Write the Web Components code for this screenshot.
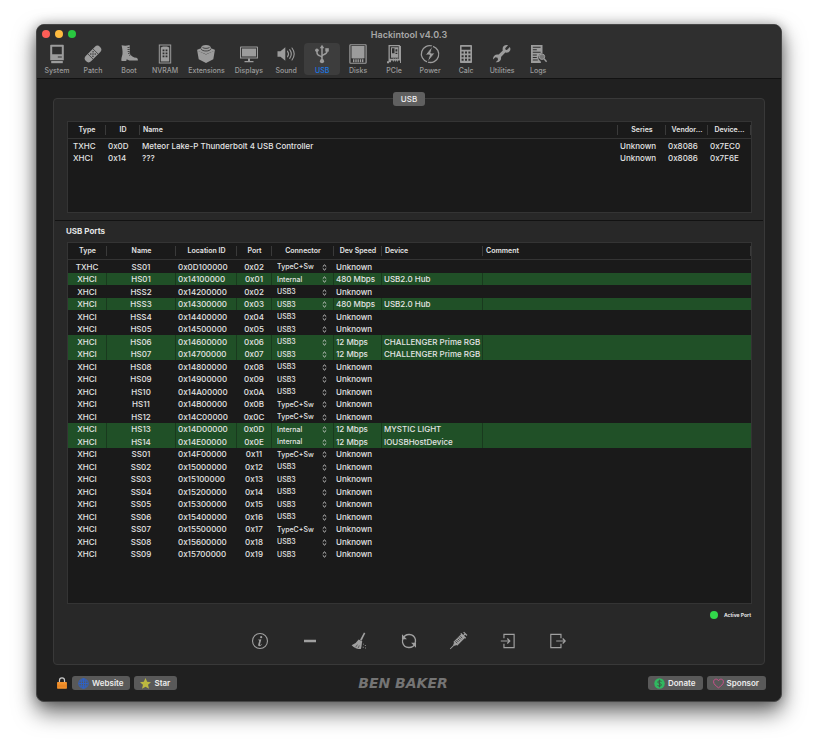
<!DOCTYPE html>
<html lang="en">
<head>
<meta charset="utf-8">
<meta name="viewport" content="width=device-width, initial-scale=1">
<title>Hackintool</title>
<style>
  body {
    background: #fff;
    color: #e4e4e4;
    font-family: Inter, "Liberation Sans", sans-serif;
    font-size: 8px;
    margin: 0;
  }
</style>
</head>
<body>

<template id="window-template">
  <style>
    :host {
      background: #202020;
      border: 1px solid #474747;
      border-radius: 8px;
      box-shadow: 0 10px 22px rgba(0, 0, 0, 0.6), 0 0 12px rgba(0, 0, 0, 0.25);
      box-sizing: border-box;
      display: flex;
      flex-direction: column;
      margin: 24px 36px 48px;
      min-height: calc(100vh - 72px);
    }
    .top {
      background: #2f2f2f;
      border-bottom: 1px solid #121212;
      border-radius: 7px 7px 0 0;
    }
    .title {
      align-items: center;
      display: grid;
      grid-template-columns: 1fr auto 1fr;
      height: 18px;
      padding: 0 5px;
    }
    h1 {
      color: #a8a8a8;
      font-size: 9px;
      font-weight: 600;
      margin: 0;
    }
    .lights {
      display: flex;
      gap: 5px;
    }
    .lights i {
      background: #fe5e57;
      border-radius: 50%;
      height: 8px;
      width: 8px;
    }
    .lights i:nth-child(2) { background: #febb3f; }
    .lights i:nth-child(3) { background: #29c840; }
    nav {
      display: flex;
      padding: 0 0 3px 2px;
    }
    main {
      display: flex;
      flex: 1;
      flex-direction: column;
      padding: 19px 16px 0;
    }
    footer {
      align-items: center;
      display: grid;
      grid-template-columns: 1fr auto 1fr;
      height: 36px;
      padding: 0 15px 0 19px;
    }
  </style>
  <div class="top">
    <div class="title">
      <div class="lights"><i></i><i></i><i></i></div>
      <h1><slot name="title"></slot></h1>
    </div>
    <nav><slot name="tools"></slot></nav>
  </div>
  <main><slot></slot></main>
  <footer><slot name="footer"></slot></footer>
</template>

<template id="tool-template">
  <style>
    :host { display: block; }
    button {
      align-items: center;
      background: none;
      border: 0;
      border-radius: 4px;
      color: #9c9c9c;
      display: flex;
      flex-direction: column;
      font: 500 7px/8px Inter, sans-serif;
      gap: 3px;
      height: 32px;
      min-width: 36px;
      padding: 1px 5px 0;
    }
    :host([selected]) button { background: #3d3d3d; }
    :host([selected]) span { color: #1a78e8; }
  </style>
  <button type="button"><hack-icon></hack-icon><span><slot></slot></span></button>
</template>

<template id="tab-template">
  <style>
    :host {
      background: #282828;
      border: 1px solid #393939;
      border-radius: 4px;
      display: flex;
      flex: 1;
      flex-direction: column;
    }
    .tab {
      align-self: center;
      background: #606060;
      border: 0;
      border-radius: 3px;
      color: #efefef;
      font: 500 8px/14px Inter, sans-serif;
      margin: -7px 0 15px;
      padding: 0 8px;
    }
  </style>
  <button type="button" class="tab"></button>
  <slot></slot>
</template>

<template id="table-template">
  <style>
    :host {
      background: #1a1a1a;
      border: 1px solid #343434;
      display: block;
      margin: 0 12px 0 13px;
    }
    :host(.ports) { flex: 1; }
    table {
      border-spacing: 0;
      table-layout: fixed;
      width: 100%;
    }
    th {
      background: linear-gradient(#3a3a3a, #3a3a3a) right center / 1px 10px no-repeat;
      border-bottom: 1px solid #343434;
      box-sizing: border-box;
      font-weight: 600;
      font-size: 7px;
      line-height: 16px;
      padding: 0 3px;
      white-space: nowrap;
    }
    td {
      border-right: 1px solid transparent;
      font-weight: 500;
      line-height: 12px;
      padding: 0 2px;
      white-space: nowrap;
    }
    th.left { text-align: left; }
    td.center { text-align: center; }
    td.inset { padding-left: 5px; }
    /* rows run on a 25px pitch for every two */
    tr { height: 12px; }
    tbody tr:nth-child(odd) { height: 13px; }
    tr.active td {
      background: #205027;
      border-right-color: #193a1e;
    }
    tr.active td:last-child { border-right-color: #205027; }
  </style>
  <table><thead><tr></tr></thead><tbody></tbody></table>
</template>

<template id="picker-template">
  <style>
    :host {
      align-items: center;
      box-sizing: border-box;
      display: flex;
      height: 12px;
      padding: 1px 4px 0 3px;
    }
    select {
      appearance: none;
      background: none;
      border: 0;
      color: #e4e4e4;
      flex: 1;
      font: 500 7px/10px Inter, sans-serif;
      min-width: 0;
      padding: 0;
    }
    option { background: #1a1a1a; }
    svg {
      height: 7px;
      pointer-events: none;
      width: 5px;
    }
  </style>
  <select>
    <option>USB3</option>
    <option>Internal</option>
    <option>TypeC+Sw</option>
  </select>
  <svg viewBox="0 0 5 7" fill="none" stroke="#d0d0d0" stroke-width="1"><path d="M.8 2.600 2.500 1l1.700 1.600M.8 4.400 2.500 6l1.700-1.600"/></svg>
</template>

<template id="push-template">
  <style>
    :host { display: block; }
    a {
      align-items: center;
      background: #595959;
      border-radius: 3px;
      color: #ececec;
      display: flex;
      font-weight: 600;
      gap: 3px;
      line-height: 14px;
      padding: 0 7px 0 6px;
      text-decoration: none;
    }
  </style>
  <a href="#"><hack-icon size="11"></hack-icon><slot></slot></a>
</template>

<template id="actions-template">
  <style>
    :host {
      align-self: center;
      display: grid;
      grid-template-columns: repeat(7, 1fr);
      margin: 9px 0 14px;
      max-width: 347px;
      width: 100%;
    }
    button {
      background: none;
      border: 0;
      color: #a0a0a0;
      display: flex;
      justify-content: center;
      padding: 0;
    }
  </style>
</template>

<hack-window>
  <span slot="title">Hackintool v4.0.3</span>
  <tool-item slot="tools" icon="system">System</tool-item>
  <tool-item slot="tools" icon="patch">Patch</tool-item>
  <tool-item slot="tools" icon="boot">Boot</tool-item>
  <tool-item slot="tools" icon="nvram">NVRAM</tool-item>
  <tool-item slot="tools" icon="extensions">Extensions</tool-item>
  <tool-item slot="tools" icon="displays">Displays</tool-item>
  <tool-item slot="tools" icon="sound">Sound</tool-item>
  <tool-item slot="tools" icon="usb" selected>USB</tool-item>
  <tool-item slot="tools" icon="disks">Disks</tool-item>
  <tool-item slot="tools" icon="pcie">PCIe</tool-item>
  <tool-item slot="tools" icon="power">Power</tool-item>
  <tool-item slot="tools" icon="calc">Calc</tool-item>
  <tool-item slot="tools" icon="utilities">Utilities</tool-item>
  <tool-item slot="tools" icon="logs">Logs</tool-item>

  <tab-panel label="USB">
    <usb-controllers></usb-controllers>
    <usb-heading>USB Ports</usb-heading>
    <usb-ports class="ports"></usb-ports>
    <port-legend>Active Port</port-legend>
    <port-actions></port-actions>
  </tab-panel>

  <app-footer slot="footer">
    <hack-icon name="lock" size="12"></hack-icon>
    <push-link icon="globe">Website</push-link>
    <push-link icon="star">Star</push-link>
  </app-footer>
  <brand-name slot="footer">BEN BAKER</brand-name>
  <app-footer slot="footer" class="end">
    <push-link icon="dollar">Donate</push-link>
    <push-link icon="heart">Sponsor</push-link>
  </app-footer>
</hack-window>

<script>
// all icons are drawn on a 20 x 20 grid
const ICONS = {
  system: `<path fill-rule="evenodd" d="M4 .8h12q.8 0 .8.8v14.600H3.200V1.600Q3.200.8 4 .8zm1.200 2v7.400h9.600V2.800zm5.600 9.600v1h4v-1z"/><path d="M4.200 17h11.600v2.200H4.200z"/>`,
  patch: `<g transform="rotate(-45 10 10)"><rect x="0" y="6.200" width="20" height="7.600" rx="3.800"/><path d="M6.400 6v8M13.600 6v8" stroke="#2f2f2f" stroke-width=".7"/><g fill="#2f2f2f"><circle cx="8.400" cy="8.500" r=".7"/><circle cx="11.600" cy="8.500" r=".7"/><circle cx="10" cy="10" r=".7"/><circle cx="8.400" cy="11.500" r=".7"/><circle cx="11.600" cy="11.500" r=".7"/></g></g>`,
  boot: `<path d="M2.600 1.200c2.600.7 5.300.6 8-.2.300 3 .200 5.800.4 8.400.8 2.900 3.600 3.900 6.400 4.400 1.200.3 1.500 1.500 1.500 2.700h-8.700l-2.500-1.200-.5 1.700H2.500c-.6-2.300.6-4.500 1-7 .3-3-.3-5.800-.9-8.800z"/><path d="M8.500 3.500h2M8.500 5.500h2.200M8.700 7.500h2M9 9.600l2-.8M10.200 11.500l1.600-1" stroke="#2f2f2f" stroke-width=".8"/>`,
  nvram: `<path fill-rule="evenodd" d="M3.800.5h12.400v19H3.800zm1 1v17h10.400v-17z"/><path d="M5.800 3.500 8 2.500h4l2.200 1v14H5.800z"/><path d="M7.600 5.500h1.800v1.800H7.600zm3 0h1.800v1.800h-1.800zm-3 3h1.800v1.800H7.600zm3 0h1.800v1.800h-1.800zm-3 3h1.800v1.800H7.600zm3 0h1.800v1.800h-1.800z" fill="#2f2f2f"/>`,
  extensions: `<path d="M1.200 5.800 5 4.300c.2-2.300 2-3.300 5-3.300s4.800 1 5 3.300l3.800 1.500v1L10 10.200 1.200 6.800z"/><path d="m1.200 6.500 8.800 4 8.800-4-1.500 8.800L10 19l-7.300-3.700z"/><path d="M5 4.600c.5 3.200 9.500 3.200 10 0M6.500 3.400c1.200 1.300 5.800 1.300 7 0" fill="none" stroke="#2f2f2f" stroke-width=".8"/>`,
  displays: `<path fill-rule="evenodd" d="M1.800 2.500h16.400q.8 0 .8.800v11.200H1V3.300q0-.8.800-.8zm.3 1.100v9.800h15.800V3.600z"/><path d="M3 4.500h14v8H3zM9 14.500h2V17h3.500v1.200h-9V17H9z"/>`,
  sound: `<path d="M1.500 7.200h3L9.300 3.300v13.400l-4.800-3.900h-3z"/><path d="M11.500 7.200q2 2.800 0 5.600M13.700 5.600q3.200 4.400 0 8.800M16 4q4.400 6 0 12" fill="none" stroke="currentColor" stroke-width="1.100" stroke-linecap="round"/>`,
  usb: `<g fill="none" stroke="currentColor" stroke-width="1.500"><path d="M10 17V3.500M10 13.700c0-2.200-5-1.400-5-5V7M10 12.300c0-2.200 5-1.400 5-5V6"/></g><path d="M10 .8 12.300 4.200H7.700z"/><circle cx="10" cy="17.200" r="2.100"/><circle cx="4.900" cy="6.300" r="1.800"/><path d="M13.300 4.200h3.500v3.400h-3.500z"/>`,
  disks: `<path fill-rule="evenodd" d="M2.500.2h15q1.200 0 1.200 1.200v17.200q0 1.200-1.200 1.200h-15q-1.200 0-1.200-1.200V1.400Q1.300.2 2.500.2zm0 1v17.600h15V1.200z"/><path d="M3.500 2h13v12.200h-13zM5 15.200h1.400v3H5zm2.300 0h1.400v3H7.300zm2.200 0h1.400v3H9.500zm2.300 0h1.400v3h-1.400zm2.200 0h1.400v3H14z"/><path d="M4.500 14.500h11" stroke="#686868" stroke-width="1"/>`,
  pcie: `<path fill-rule="evenodd" d="M4.500 1h10.700q1 0 1 1v14.500H7v1.700H5v1H3v-2h1.500zm1.300 1.300v12.500h9V2.300z"/><path fill-rule="evenodd" d="M7 3.300h7.300v10.400H7zm1 1v5h2.500v-5zm3.500 1v2.200h1.800V5.300zm0 3.500v1.300h1.800V8.800z"/><path d="M9.400 14.500v3M11.400 14.500v3M13.400 14.500v3M16.500 2v17" stroke="currentColor" stroke-width="1"/>`,
  power: `<path d="M7.200 17.900A8.300 8.300 0 0 1 12.200 2M13 2.300A8.300 8.300 0 0 1 7.900 18.100" fill="none" stroke="currentColor" stroke-width="1.300"/><path d="M12.800 1.500 5.300 11h4.200l-2.300 7.500L15 9h-4.200z" stroke="#2f2f2f" stroke-width=".9"/>`,
  calc: `<path fill-rule="evenodd" d="M4.800 1h10.400q.8 0 .8.800v16.400q0 .8-.8.800H4.800Q4 19 4 18.200V1.800Q4 1 4.800 1zm.8 1.800v3h8.800v-3zm0 4.800v2h2v-2zm3.400 0v2h2v-2zm3.400 0v2h2v-2zm-6.800 3.600v2h2v-2zm3.400 0v2h2v-2zm3.400 0v2h2v-2zm-6.800 3.600v2h2v-2zm3.400 0v2h2v-2zm3.400 0v2h2v-2z"/>`,
  utilities: `<path d="M17.900 2.900 14.900 6l-1.300-.3-.4-1.500 2.800-3c-3.600-.8-6.200 1.700-5.200 5.200L6.700 10.600c-3-.9-6 1.200-5.600 4.900l2.300-2.300 2.200.6.400 2.100-2.300 2.400c3.700.5 6-2 5.300-5.400l4.300-4.300c3.700.8 6.300-2.100 4.600-5.700z"/>`,
  logs: `<path fill-rule="evenodd" d="M3 1h11.500v8.500a4 4 0 0 0-2 7.500l.5 2H3zm1.800 1.800v1h7.800v-1zm0 2.500v1h4v-1zm0 2.500v1h7.800v-1zm0 2.600v1h4v-1zm0 2.600v1h4v-1zm0 2.600v1h5v-1z"/><circle cx="14" cy="12.700" r="2.700" fill="#777" stroke="currentColor" stroke-width="1"/><path d="m16 14.800 2.600 3" stroke="currentColor" stroke-width="1.400"/>`,
  info: `<circle cx="10" cy="10" r="8.300" fill="none" stroke="currentColor" stroke-width="1.200"/><circle cx="11.300" cy="5.700" r="1.200"/><path d="M7.700 8.600q1.800-.1 3.800-.5l-1.500 5.500q-.2.900.3.900.6-.1 1.500-1.200l.4.300q-1.500 2.100-3 2.100-1.700 0-1.200-1.900l1.100-3.900q.1-.8-1.400-.9z"/>`,
  minus: `<path d="M3.300 8.600h13.400v2.800H3.300z"/>`,
  broom: `<path d="m15.500.6 1.500.8-4.100 8.200-1.700-.9z"/><path d="m9.600 8.200 4 2q-.4 2-.6 3.900-.2 2.700-1 4.800-6 0-10.200-4.300 4.800-1.600 7.800-6.400z"/><path d="m6.200 17 2-3M9 18l1.300-3" stroke="#282828" stroke-width=".6"/><path d="M14.500 13h1v1h-1zm2 1.500h1v1h-1zm-2.300 2h1v1h-1zm2.600.8h.9v.9h-.9z"/>`,
  refresh: `<path d="M3.200 7.500a7.300 7.300 0 0 1 13.900.7q.5 3-.8 5.300M16.800 12.500a7.300 7.300 0 0 1-13.900-.7q-.5-2.300.5-4.800" fill="none" stroke="currentColor" stroke-width="1.500"/><path d="M2.200 2.600v5.500h5.500zM17.800 17.400v-5.500h-5.500z"/>`,
  syringe: `<g transform="translate(-1 0) rotate(45 10 10)"><path d="M9.500 16h1v6.500h-1zM8.500 14.500h3v2h-3zM7 2h6v12.500H7zM9.300-1h1.400V2H9.300zM7.400-2h5.200v1.400H7.400zM6.200 1.200h7.600v1.400H6.200z"/><path d="M8 4.500h3M8 6.500h3M8 8.500h3M8 10.500h3M8 12.500h3" stroke="#282828" stroke-width=".8"/></g>`,
  import: `<g fill="none" stroke="currentColor" stroke-width="1.300"><path d="M5.500 7V2.700h11.300v14.600H5.500V13M2 10h10M9.200 7.200 12 10l-2.800 2.800"/></g>`,
  export: `<g fill="none" stroke="currentColor" stroke-width="1.300"><path d="M13.300 7V2.700H2v14.600h11.300V13M8 10h10M15.200 7.200 18 10l-2.800 2.800"/></g>`,
  lock: `<path d="M5.800 10V5.500a4.200 4.200 0 0 1 8.400 0V10" fill="none" stroke="#c9c9c9" stroke-width="2"/><rect x="1.800" y="8.500" width="16.400" height="11" rx="1" fill="#f3932e"/><path d="M1.800 13h16.400v1H1.800zm0 3h16.400v1H1.800z" fill="#df7c1c"/>`,
  globe: `<g fill="none" stroke="#2e62c8" stroke-width="1.700"><circle cx="10" cy="10" r="8.600"/><ellipse cx="10" cy="10" rx="4" ry="8.600"/><path d="M10 1.400v17.200M1.400 10h17.200M3 5.500h14M3 14.500h14"/></g>`,
  star: `<path d="m10 .2 3 6.800 7 .6-5.400 4.800 1.700 7.200L10 15.800l-6.300 3.800 1.700-7.200L0 7.600 7 7z" fill="#bcb840"/>`,
  dollar: `<circle cx="10" cy="10" r="9.500" fill="#30b860"/><path d="M13.300 7q-.4-2-3.300-2-3 0-3 2.400 0 2 3 2.500 3.300.5 3.300 2.700T10 15q-3 0-3.400-2.200M10 3v14" fill="none" stroke="#3f5948" stroke-width="1.700"/>`,
  heart: `<path d="M10 17.800C5.500 14.500 1 11.300 1 6.900c0-5.500 7-6.400 9-1.900 2-4.500 9-3.600 9 1.900 0 4.400-4.500 7.600-9 10.900z" fill="none" stroke="#c8508a" stroke-width="1.800"/>`
}

const PORTS = [
  ['TXHC', 'SS01', '0x0D100000', '0x02', 'TypeC+Sw', 'Unknown', ''],
  ['XHCI', 'HS01', '0x14100000', '0x01', 'Internal', '480 Mbps', 'USB2.0 Hub'],
  ['XHCI', 'HSS2', '0x14200000', '0x02', 'USB3', 'Unknown', ''],
  ['XHCI', 'HSS3', '0x14300000', '0x03', 'USB3', '480 Mbps', 'USB2.0 Hub'],
  ['XHCI', 'HSS4', '0x14400000', '0x04', 'USB3', 'Unknown', ''],
  ['XHCI', 'HS05', '0x14500000', '0x05', 'USB3', 'Unknown', ''],
  ['XHCI', 'HS06', '0x14600000', '0x06', 'USB3', '12 Mbps', 'CHALLENGER Prime RGB'],
  ['XHCI', 'HS07', '0x14700000', '0x07', 'USB3', '12 Mbps', 'CHALLENGER Prime RGB'],
  ['XHCI', 'HS08', '0x14800000', '0x08', 'USB3', 'Unknown', ''],
  ['XHCI', 'HS09', '0x14900000', '0x09', 'USB3', 'Unknown', ''],
  ['XHCI', 'HS10', '0x14A00000', '0x0A', 'USB3', 'Unknown', ''],
  ['XHCI', 'HS11', '0x14B00000', '0x0B', 'TypeC+Sw', 'Unknown', ''],
  ['XHCI', 'HS12', '0x14C00000', '0x0C', 'TypeC+Sw', 'Unknown', ''],
  ['XHCI', 'HS13', '0x14D00000', '0x0D', 'Internal', '12 Mbps', 'MYSTIC LIGHT'],
  ['XHCI', 'HS14', '0x14E00000', '0x0E', 'Internal', '12 Mbps', 'IOUSBHostDevice'],
  ['XHCI', 'SS01', '0x14F00000', '0x11', 'TypeC+Sw', 'Unknown', ''],
  ['XHCI', 'SS02', '0x15000000', '0x12', 'USB3', 'Unknown', ''],
  ['XHCI', 'SS03', '0x15100000', '0x13', 'USB3', 'Unknown', ''],
  ['XHCI', 'SS04', '0x15200000', '0x14', 'USB3', 'Unknown', ''],
  ['XHCI', 'SS05', '0x15300000', '0x15', 'USB3', 'Unknown', ''],
  ['XHCI', 'SS06', '0x15400000', '0x16', 'USB3', 'Unknown', ''],
  ['XHCI', 'SS07', '0x15500000', '0x17', 'TypeC+Sw', 'Unknown', ''],
  ['XHCI', 'SS08', '0x15600000', '0x18', 'USB3', 'Unknown', ''],
  ['XHCI', 'SS09', '0x15700000', '0x19', 'USB3', 'Unknown', '']
]

// attach an open shadow root filled from a template on the page
function stamp(element, id) {
  const root = element.attachShadow({ mode: 'open' })
  root.appendChild(document.getElementById(id).content.cloneNode(true))
  return root
}

class HackIcon extends HTMLElement {
  static get observedAttributes() {
    return ['name', 'size']
  }

  constructor() {
    super()
    this.attachShadow({ mode: 'open' })
  }

  // draws again when the parent sets the name after the icon is in place
  attributeChangedCallback() {
    const size = this.getAttribute('size') || 20
    this.shadowRoot.innerHTML = `
      <style>
        :host { display: block; flex: none; }
        svg { display: block; overflow: visible; }
      </style>
      <svg width="${size}" height="${size}" viewBox="0 0 20 20" fill="currentColor" aria-hidden="true">${ICONS[this.getAttribute('name')] || ''}</svg>
    `
  }
}

class HackWindow extends HTMLElement {
  constructor() {
    super()
    stamp(this, 'window-template')
  }
}

class ToolItem extends HTMLElement {
  constructor() {
    super()
    stamp(this, 'tool-template').querySelector('hack-icon').setAttribute('name', this.getAttribute('icon'))
  }
}

class TabPanel extends HTMLElement {
  constructor() {
    super()
    stamp(this, 'tab-template').querySelector('.tab').textContent = this.getAttribute('label')
  }
}

// shared by both tables, subclasses give the columns and the rows
class DataTable extends HTMLElement {
  constructor() {
    super()
    this.root = stamp(this, 'table-template')
    const head = this.root.querySelector('thead tr')
    this.columns.forEach(column => {
      const th = document.createElement('th')
      th.scope = 'col'
      th.textContent = column.label
      if (column.width) th.style.width = `${column.width}px`
      if (column.left) th.className = 'left'
      head.appendChild(th)
    })
    this.rows.forEach(row => this.addRow(row))
  }

  addRow(row) {
    const tr = document.createElement('tr')
    row.forEach((value, i) => {
      const td = document.createElement('td')
      td.className = this.columns[i].cell || ''
      td.append(value)
      tr.appendChild(td)
    })
    this.root.querySelector('tbody').appendChild(tr)
    return tr
  }
}

class UsbControllers extends DataTable {
  constructor() {
    super()
    this.style.minHeight = '90px'
  }

  get columns() {
    return [
      { label: 'Type', width: 38, cell: 'inset' },
      { label: 'ID', width: 34 },
      { label: 'Name', left: true },
      { label: 'Series', width: 48 },
      { label: 'Vendor...', width: 42 },
      { label: 'Device...', width: 43 }
    ]
  }

  get rows() {
    return [
      ['TXHC', '0x0D', 'Meteor Lake-P Thunderbolt 4 USB Controller', 'Unknown', '0x8086', '0x7EC0'],
      ['XHCI', '0x14', '???', 'Unknown', '0x8086', '0x7F6E']
    ]
  }
}

class UsbPorts extends DataTable {
  get columns() {
    return [
      { label: 'Type', width: 39, cell: 'center' },
      { label: 'Name', width: 69, cell: 'center' },
      { label: 'Location ID', width: 61 },
      { label: 'Port', width: 35, cell: 'center' },
      { label: 'Connector', width: 62 },
      { label: 'Dev Speed', width: 48 },
      { label: 'Device', width: 101, left: true },
      { label: 'Comment', left: true }
    ]
  }

  get rows() {
    return PORTS
  }

  addRow([type, name, location, port, connector, speed, device]) {
    const picker = document.createElement('connector-picker')
    picker.value = connector
    picker.label = `Connector of ${name}`
    const tr = super.addRow([type, name, location, port, picker, speed, device, ''])
    // a port is active when a device is plugged in
    if (device) tr.className = 'active'
    return tr
  }
}

class ConnectorPicker extends HTMLElement {
  constructor() {
    super()
    this.select = stamp(this, 'picker-template').querySelector('select')
  }

  set value(value) {
    this.select.value = value
  }

  set label(label) {
    this.select.setAttribute('aria-label', label)
  }
}

class UsbHeading extends HTMLElement {
  constructor() {
    super()
    this.attachShadow({ mode: 'open' }).innerHTML = `
      <style>
        :host {
          border-top: 1px solid #121212;
          display: block;
          margin: 7px 1px 0;
        }
        h2 { font-size: 8px; font-weight: 700; line-height: 12px; margin: 4px 11px 5px; }
      </style>
      <h2><slot></slot></h2>
    `
  }
}

class PortLegend extends HTMLElement {
  constructor() {
    super()
    this.attachShadow({ mode: 'open' }).innerHTML = `
      <style>
        :host {
          align-items: center;
          align-self: flex-end;
          display: flex;
          font-size: 5px;
          font-weight: 700;
          gap: 6px;
          line-height: 8px;
          margin: 7px 13px 4px;
        }
        i { background: #32d74b; border-radius: 50%; height: 8px; width: 8px; }
      </style>
      <i></i><slot></slot>
    `
  }
}

class PortActions extends HTMLElement {
  constructor() {
    super()
    const root = stamp(this, 'actions-template')
    const actions = ['info', 'minus', 'broom', 'refresh', 'syringe', 'import', 'export']
    actions.forEach(name => {
      const button = document.createElement('button')
      button.type = 'button'
      button.setAttribute('aria-label', name)
      button.innerHTML = `<hack-icon name="${name}" size="18"></hack-icon>`
      root.appendChild(button)
    })
  }
}

class PushLink extends HTMLElement {
  constructor() {
    super()
    stamp(this, 'push-template').querySelector('hack-icon').setAttribute('name', this.getAttribute('icon'))
  }
}

class AppFooter extends HTMLElement {
  constructor() {
    super()
    this.attachShadow({ mode: 'open' }).innerHTML = `
      <style>
        :host { align-items: center; display: flex; gap: 4px; }
        :host(.end) { justify-content: flex-end; }
      </style>
      <slot></slot>
    `
  }
}

class BrandName extends HTMLElement {
  constructor() {
    super()
    this.attachShadow({ mode: 'open' }).innerHTML = `
      <style>
        :host {
          color: #747474;
          display: block;
          font: italic 700 14px/14px "DejaVu Sans", sans-serif;
          margin-right: 16px;
        }
      </style>
      <slot></slot>
    `
  }
}

customElements.define('hack-icon', HackIcon)
customElements.define('hack-window', HackWindow)
customElements.define('tool-item', ToolItem)
customElements.define('tab-panel', TabPanel)
customElements.define('connector-picker', ConnectorPicker)
customElements.define('usb-controllers', UsbControllers)
customElements.define('usb-heading', UsbHeading)
customElements.define('usb-ports', UsbPorts)
customElements.define('port-legend', PortLegend)
customElements.define('port-actions', PortActions)
customElements.define('push-link', PushLink)
customElements.define('app-footer', AppFooter)
customElements.define('brand-name', BrandName)
</script>
</body>
</html>
